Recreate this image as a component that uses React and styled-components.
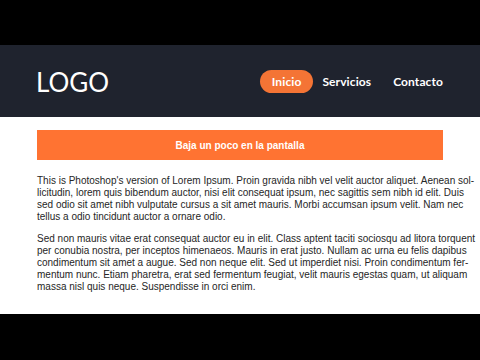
import styled, { createGlobalStyle } from 'styled-components';

const Global = createGlobalStyle`
  html, body { margin: 0; padding: 0; background: #000; }
  body { width: 480px; height: 360px; overflow: hidden; }
`;

const Screen = styled.div`
  width: 480px;
  height: 360px;
  display: flex;
  flex-direction: column;
  background: #000;
`;

const Letterbox = styled.div`
  height: ${p => p.h}px;
  flex-shrink: 0;
  background: #000;
`;

const Header = styled.header`
  height: 72px;
  flex-shrink: 0;
  background: #1f232e;
  display: flex;
  align-items: center;
  justify-content: space-between;
  padding: 0 26px 0 36px;
`;

const Logo = styled.div`
  color: #fff;
  font-family: Lato, "Open Sans", sans-serif;
  font-weight: 400;
  font-size: 26px;
  letter-spacing: 0;
  margin-top: 1px;
`;

const Nav = styled.nav`
  display: flex;
  align-items: center;
`;

const NavItem = styled.a`
  display: flex;
  align-items: center;
  height: 23px;
  padding: 0 ${p => (p.active ? 12 : 11)}px;
  margin-right: ${p => (p.active ? -2 : 0)}px;
  border-radius: 12px;
  background: ${p => (p.active ? '#f47435' : 'transparent')};
  color: #fff;
  font-family: Lato, "Open Sans", sans-serif;
  font-weight: 700;
  font-size: 12px;
  letter-spacing: 0.1px;
  text-decoration: none;
`;

const Main = styled.main`
  height: 197px;
  flex-shrink: 0;
  background: #fff;
  padding: 13px 37px 0;
  box-sizing: border-box;
`;

const Banner = styled.div`
  height: 30px;
  background: #ff7332;
  display: flex;
  align-items: center;
  justify-content: center;
  color: #fff;
  font-family: "Liberation Sans", Arial, sans-serif;
  font-weight: 700;
  font-size: 10px;
`;

const Paragraph = styled.div`
  margin-top: ${p => p.gap}px;
  font-family: "Liberation Sans", Arial, sans-serif;
  font-size: 10px;
  line-height: 12px;
  color: #262626;
`;

const Line = styled.span`
  display: block;
  text-align: justify;
  text-align-last: ${p => (p.last ? 'left' : 'justify')};
  white-space: nowrap;
`;

const para1 = [
  "This is Photoshop's version  of Lorem Ipsum. Proin gravida nibh vel velit auctor aliquet. Aenean sol-",
  'licitudin, lorem quis bibendum auctor, nisi elit consequat ipsum, nec sagittis sem nibh id elit. Duis',
  'sed odio sit amet nibh vulputate cursus a sit amet mauris. Morbi accumsan ipsum velit. Nam nec',
  'tellus a odio tincidunt auctor a ornare odio.',
];

const para2 = [
  'Sed non  mauris vitae erat consequat auctor eu in elit. Class aptent taciti sociosqu ad litora torquent',
  'per conubia nostra, per inceptos himenaeos. Mauris in erat justo. Nullam ac urna eu felis dapibus',
  'condimentum sit amet a augue. Sed non neque elit. Sed ut imperdiet nisi. Proin condimentum fer-',
  'mentum nunc. Etiam pharetra, erat sed fermentum feugiat, velit mauris egestas quam, ut aliquam',
  'massa nisl quis neque. Suspendisse in orci enim.',
];

function Text({ lines, gap }) {
  return (
    <Paragraph gap={gap}>
      {lines.map((l, i) => (
        <Line key={i} last={i === lines.length - 1}>{l}</Line>
      ))}
    </Paragraph>
  );
}

export default function App() {
  return (
    <>
      <Global />
      <Screen>
        <Letterbox h={45} />
        <Header>
          <Logo>LOGO</Logo>
          <Nav>
            <NavItem active>Inicio</NavItem>
            <NavItem>Servicios</NavItem>
            <NavItem>Contacto</NavItem>
          </Nav>
        </Header>
        <Main>
          <Banner>Baja un poco en la pantalla</Banner>
          <Text lines={para1} gap={15} />
          <Text lines={para2} gap={10} />
        </Main>
        <Letterbox h={46} />
      </Screen>
    </>
  );
}
